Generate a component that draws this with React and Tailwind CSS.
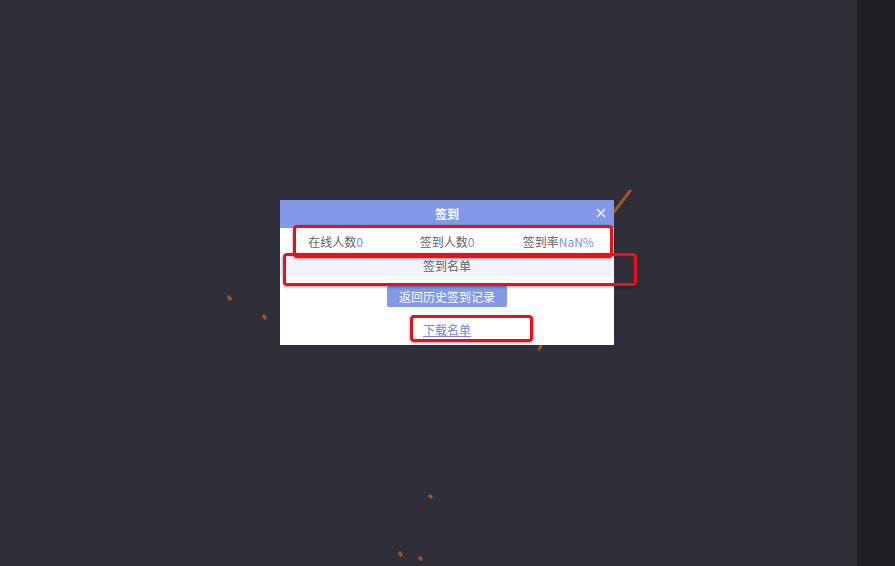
import React from 'react'

// ── Диалог «签到»: статистика, список, кнопки ──

const font = { fontFamily: '"Noto Sans CJK SC", "Liberation Sans", sans-serif' }

function Stat({ label, value }) {
  return (
    <div className="flex-1 text-center">
      <span className="text-[#606266]">{label}</span>
      <span className="text-[#7b91e2]">{value}</span>
    </div>
  )
}

export default function App() {
  return (
    <div className="relative flex h-[566px] w-[895px] overflow-hidden" style={font}>
      <div className="flex-1 bg-[#2e2f38]" />
      <div className="w-[38px] bg-[#1f1f23]" />

      {/* оранжевые штрихи на фоне */}
      <svg className="absolute left-0 top-0" width="895" height="566">
        <g stroke="#a9501c" strokeLinecap="round" fill="none">
          <line x1="614" y1="212" x2="630" y2="191" strokeWidth="3" />
          <line x1="229" y1="297" x2="230" y2="299" strokeWidth="3.5" />
          <line x1="264" y1="316" x2="265" y2="318" strokeWidth="3.5" />
          <line x1="430" y1="496" x2="431" y2="497" strokeWidth="3.5" />
          <line x1="400" y1="553" x2="401" y2="555" strokeWidth="3.5" />
          <line x1="420" y1="558" x2="421" y2="559" strokeWidth="3.5" />
          <line x1="539" y1="349" x2="541" y2="346" strokeWidth="3" />
        </g>
      </svg>

      <div className="absolute left-[280px] top-[200px] w-[334px] bg-white text-[12px]">
        <div className="relative flex h-[28px] items-center justify-center bg-[#8199e8] font-bold text-white">
          签到
          <svg className="absolute right-[8px] top-[8px]" width="10" height="10" viewBox="0 0 10 10">
            <path d="M1 1L9 9M9 1L1 9" stroke="white" strokeWidth="1.2" />
          </svg>
        </div>
        <div className="flex h-[28px] items-center">
          <Stat label="在线人数" value="0" />
          <Stat label="签到人数" value="0" />
          <Stat label="签到率" value="NaN%" />
        </div>
        <div className="flex h-[20px] items-center justify-center bg-[#f0f3fc] text-[#606266]">签到名单</div>
        <div className="flex justify-center pt-[10px]">
          <button className="h-[21px] w-[120px] rounded-[2px] bg-[#8199e8] text-white">返回历史签到记录</button>
        </div>
        <div className="flex h-[38px] items-end justify-center pb-[6px]">
          <a className="text-[#6f86d9] underline">下载名单</a>
        </div>
      </div>

      {/* красные рамки-пометки */}
      <div className="absolute left-[293px] top-[225px] h-[33px] w-[320px] rounded-[4px] border-[3px] border-[#e8101a] shadow-[0_1px_3px_rgba(0,0,0,0.4)]" />
      <div className="absolute left-[283px] top-[253px] h-[33px] w-[354px] rounded-[4px] border-[3px] border-[#e8101a] shadow-[0_1px_3px_rgba(0,0,0,0.4)]" />
      <div className="absolute left-[410px] top-[315px] h-[27px] w-[123px] rounded-[4px] border-[3px] border-[#e8101a] shadow-[0_1px_3px_rgba(0,0,0,0.4)]" />
    </div>
  )
}
